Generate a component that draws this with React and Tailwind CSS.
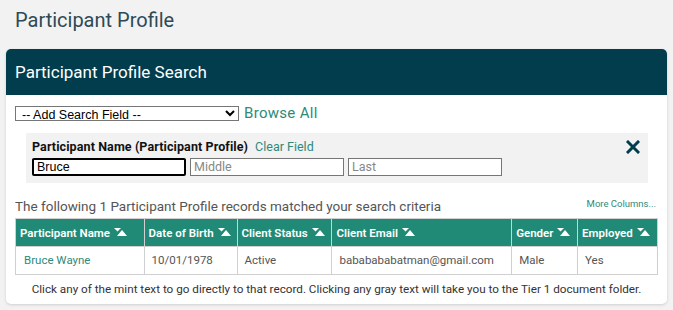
import React, { useState } from 'react';

const SortIcon = () => (
  <svg width="13" height="9" viewBox="0 0 13 9" className="inline-block ml-1 -mt-0.5">
    <polygon points="0,0 7,0 3.5,3.5" fill="white" />
    <polygon points="8,2 13,8 3,8" fill="white" />
  </svg>
);

const columns = [
  { label: 'Participant Name', width: 'w-[129px]' },
  { label: 'Date of Birth', width: 'w-[93px]' },
  { label: 'Client Status', width: 'w-[95px]' },
  { label: 'Client Email', width: 'w-[180px]' },
  { label: 'Gender', width: 'w-[66px]' },
  { label: 'Employed', width: 'w-[80px]' },
];

const App = () => {
  const [first, setFirst] = useState('Bruce');

  return (
    <div className="min-h-[310px] bg-[#f2f2f2] font-['Roboto',sans-serif] overflow-hidden">
      <h1 className="px-[15px] pt-[8px] h-[49px] text-[20px] text-[#2d4a57] leading-[24px]">
        Participant Profile
      </h1>

      <div className="mx-[6px] bg-white rounded-[5px] shadow-[0_1px_3px_rgba(0,0,0,0.15)] pb-[7px]">
        <div className="bg-[#023d4e] rounded-t-[5px] h-[46px] flex items-center px-[9px]">
          <h2 className="text-white text-[17px] leading-none pt-[1px]">Participant Profile Search</h2>
        </div>

        <div className="px-[9px] pt-[11px]">
          <div className="flex items-center gap-[5px]">
            <select className="w-[224px] h-[15px] border border-[#767676] text-[12.5px] leading-none font-['Liberation_Sans',sans-serif] text-black bg-white pl-[2px]">
              <option>-- Add Search Field --</option>
            </select>
            <a className="text-[15px] text-[#2e8a7b] tracking-[0.3px] leading-none">Browse All</a>
          </div>

          <div className="ml-[11px] mr-[10px] mt-[12px] bg-[#f2f2f2] h-[50px] pl-[6px] pt-[5px] flex justify-between">
            <div>
              <div className="flex items-center gap-[7px] text-[12.5px] leading-[17px]">
                <span className="font-bold text-[#111] tracking-[0.1px]">Participant Name (Participant Profile)</span>
                <a className="text-[#2e8a7b]">Clear Field</a>
              </div>
              <div className="flex gap-[4px] mt-[3px]">
                <input
                  value={first}
                  onChange={(e) => setFirst(e.target.value)}
                  className="w-[154px] h-[18px] bg-white border-2 border-black rounded-[2px] px-[3px] text-[12.5px] font-['Liberation_Sans',sans-serif] text-black outline-none"
                />
                <input
                  placeholder="Middle"
                  className="w-[154px] h-[18px] bg-white border border-[#767676] px-[3px] text-[12.5px] placeholder:text-[#888] outline-none"
                />
                <input
                  placeholder="Last"
                  className="w-[154px] h-[18px] bg-white border border-[#767676] px-[3px] text-[12.5px] placeholder:text-[#888] outline-none"
                />
              </div>
            </div>
            <svg width="14" height="14" viewBox="0 0 14 14" className="mt-[2px] mr-[8px]">
              <path d="M2 2 L12 12 M12 2 L2 12" stroke="#023d4e" strokeWidth="3" strokeLinecap="square" />
            </svg>
          </div>

          <div className="flex justify-between items-end mt-[14px] pr-[2px]">
            <p className="text-[13.5px] text-[#555] leading-[18px]">
              The following 1 Participant Profile records matched your search criteria
            </p>
            <a className="text-[9.5px] text-[#2e8a7b] leading-none mb-[7px]">More Columns...</a>
          </div>

          <table className="mt-[3px] w-[643px] border-collapse text-[11.5px]">
            <thead>
              <tr className="bg-[#218a77] h-[28px]">
                {columns.map((c) => (
                  <th
                    key={c.label}
                    className={`${c.width} border border-[#d0d0d0] text-left font-semibold text-white px-[4px] pt-[2px] whitespace-nowrap`}
                  >
                    {c.label}
                    <SortIcon />
                  </th>
                ))}
              </tr>
            </thead>
            <tbody>
              <tr className="h-[28px] text-[#555] text-[11.5px]">
                <td className="border border-[#d0d0d0] px-[8px] text-[#2e8a7b]">Bruce Wayne</td>
                <td className="border border-[#d0d0d0] px-[7px]">10/01/1978</td>
                <td className="border border-[#d0d0d0] px-[7px]">Active</td>
                <td className="border border-[#d0d0d0] px-[7px]">bababababatman@gmail.com</td>
                <td className="border border-[#d0d0d0] px-[7px]">Male</td>
                <td className="border border-[#d0d0d0] px-[7px]">Yes</td>
              </tr>
            </tbody>
          </table>

          <p className="text-center text-[11.7px] text-[#333] mt-[7px] leading-[15px]">
            Click any of the mint text to go directly to that record. Clicking any gray text will take you to the Tier 1 document folder.
          </p>
        </div>
      </div>
    </div>
  );
};

export default App;
